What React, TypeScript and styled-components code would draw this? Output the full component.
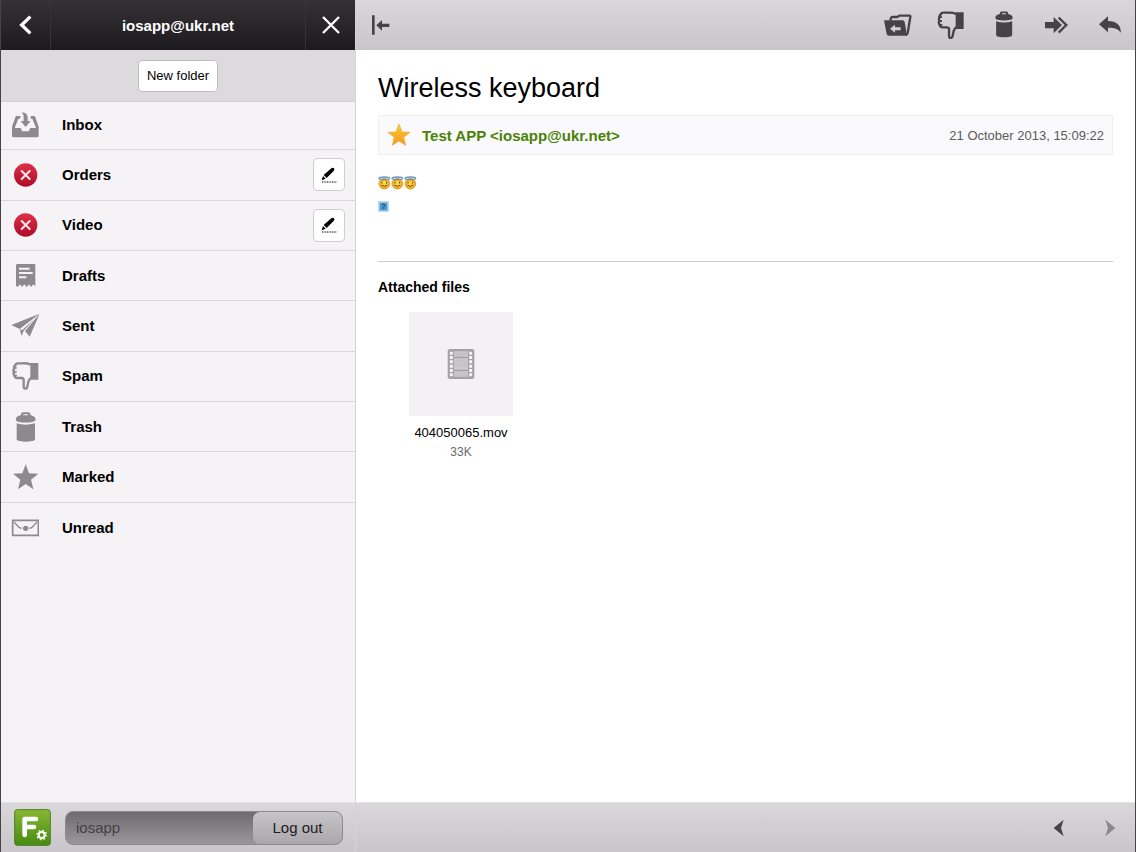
import React from "react";
import styled, { createGlobalStyle, css } from "styled-components";

const GlobalStyle = createGlobalStyle`
  *, *::before, *::after { box-sizing: border-box; }
  body { margin: 0; font-family: "Liberation Sans", Arial, sans-serif; color: #000; background: #fff; }
  button { font: inherit; color: inherit; padding: 0; border: 0; background: none; cursor: pointer; }
  h1, h2, p, ul, figure { margin: 0; padding: 0; }
  svg { display: block; }
`;

const barFill = css`
  background: linear-gradient(#d9d7da, #c8c6c9);
`;

const Shell = styled.div`
  display: grid;
  grid-template-columns: 355px minmax(0, 1fr);
  min-height: 100vh;
  border-left: 1px solid #454347;
  border-right: 1px solid #454347;
`;

const Sidebar = styled.aside`
  display: flex;
  flex-direction: column;
  background: #f5f3f6;
  border-right: 1px solid #d4d2d5;
`;

const AccountBar = styled.header`
  display: flex;
  height: 50px;
  background: linear-gradient(#343235, #1c1a1d);
  color: #fff;
`;

const AccountButton = styled.button<{ $side: "left" | "right" }>`
  display: flex;
  align-items: center;
  justify-content: center;
  width: 50px;
  ${(p) => (p.$side === "left" ? "border-right" : "border-left")}: 1px solid #353336;
`;

const AccountName = styled.h2`
  flex: 1;
  font-size: 15px;
  line-height: 51px;
  text-align: center;
`;

const FolderActions = styled.div`
  display: flex;
  align-items: center;
  justify-content: center;
  height: 52px;
  background: #dcdadd;
  border-bottom: 1px solid #d3d1d4;
`;

const NewFolder = styled.button`
  height: 32px;
  padding: 0 8px;
  font-size: 13px;
  background: #fff;
  border: 1px solid #bfbdc0;
  border-radius: 4px;
`;

const FolderList = styled.ul`
  display: grid;
  grid-template-rows: repeat(9, 1fr);
  height: 453px;
  margin-top: -2px;
  list-style: none;
`;

const FolderRow = styled.li`
  display: flex;
  align-items: center;
  padding: 0 10px;
  &:not(:last-child) {
    border-bottom: 1px solid #d9d7da;
  }
`;

const FolderLink = styled.a`
  flex: 1;
  margin-left: 23px;
  font-size: 15px;
  font-weight: bold;
  line-height: 20px;
  color: #000;
  text-decoration: none;
`;

const EditButton = styled.button`
  display: flex;
  align-items: center;
  justify-content: center;
  width: 32px;
  height: 33px;
  background: #fff;
  border: 1px solid #cfcdd0;
  border-radius: 4px;
`;

const SidebarFooter = styled.footer`
  ${barFill}
  display: flex;
  align-items: center;
  gap: 14px;
  height: 50px;
  margin-top: auto;
  padding: 0 12px 0 13px;
  border-top: 1px solid #e4e2e5;
`;

const SessionBox = styled.div`
  display: flex;
  flex: 1;
  height: 34px;
  border: 1px solid #8d8b8e;
  border-radius: 8px;
  background: linear-gradient(#6d6b6e, #99979a);
`;

const SessionUser = styled.span`
  flex: 1;
  padding-left: 10px;
  font-size: 15px;
  line-height: 32px;
  color: #434144;
`;

const LogOut = styled.button`
  width: 89px;
  font-size: 15px;
  color: #1d1b1e;
  border-radius: 7px;
  background: linear-gradient(#c6c4c7, #a9a7aa);
`;

const Reader = styled.main`
  display: flex;
  flex-direction: column;
`;

const Toolbar = styled.header`
  ${barFill}
  display: flex;
  align-items: center;
  gap: 25px;
  height: 50px;
  padding: 0 11px 0 15px;
  color: #454347;
`;

const ToolButton = styled.button<{ $pushRight?: boolean }>`
  ${(p) => p.$pushRight && "margin-left: auto;"}
`;

const Message = styled.article`
  flex: 1;
  padding: 22px;
`;

const Subject = styled.h1`
  font-size: 27px;
  font-weight: normal;
  line-height: 32px;
`;

const SenderBar = styled.div`
  display: flex;
  align-items: center;
  height: 40px;
  margin-top: 11px;
  padding: 0 8px;
  background: #faf9fb;
  border: 1px solid #f1eff2;
`;

const Sender = styled.a`
  flex: 1;
  margin-left: 11px;
  font-size: 15px;
  font-weight: bold;
  color: #4a8208;
  text-decoration: none;
`;

const SentAt = styled.time`
  font-size: 13px;
  color: #5c5a5d;
`;

const Body = styled.div`
  display: flex;
  flex-direction: column;
  gap: 11px;
  height: 107px;
  padding-top: 21px;
  border-bottom: 1px solid #cfcdd0;
`;

const Smileys = styled.div`
  display: flex;
`;

const AttachTitle = styled.h2`
  margin-top: 15px;
  font-size: 14px;
  line-height: 20px;
`;

const Attachment = styled.figure`
  display: flex;
  flex-direction: column;
  align-items: center;
  width: 166px;
  margin-top: 15px;
`;

const Preview = styled.button`
  display: flex;
  align-items: center;
  justify-content: center;
  width: 104px;
  height: 104px;
  background: #f3f1f4;
`;

const FileName = styled.figcaption`
  margin-top: 7px;
  font-size: 13px;
  line-height: 20px;
`;

const FileSize = styled.p`
  font-size: 12px;
  line-height: 18px;
  color: #69676a;
`;

const ReaderFooter = styled(Toolbar).attrs({ as: "footer" })`
  justify-content: flex-end;
  gap: 39px;
  padding: 0 19px;
  border-top: 1px solid #e4e2e5;
`;

type IconProps = { box: string; w?: number; h?: number; children: React.ReactNode };
const Icon = ({ box, w = 28, h = 28, children }: IconProps) => (
  <svg width={w} height={h} viewBox={box} fill="currentColor" aria-hidden="true">
    {children}
  </svg>
);

const FolderIcon = styled.span`
  display: flex;
  color: #8c8a8d;
`;

const InboxIcon = () => (
  <Icon box="0 0 84 90" h={30}>
    <path fillRule="evenodd" d="M17 18H28V26H22L11 54H27Q30 54 31 57L33 64H54L56 57Q57 54 60 54H75L64 26H59V18H69Q72 18 73 22L83 50V77Q83 82 78 82H8Q3 82 3 77V50L13 22Q14 18 17 18Z" />
    <path d="M32 7Q50 8 50 24V33H59L44 51L29 33H38V24Q38 12 32 7Z" />
  </Icon>
);

const DeleteIcon = () => (
  <Icon box="0 0 84 90" h={30}>
    <defs>
      <linearGradient id="deleteFill" x1="0" y1="0" x2="0" y2="1">
        <stop offset="0" stopColor="#de3048" />
        <stop offset="1" stopColor="#ac0c28" />
      </linearGradient>
    </defs>
    <circle cx="44" cy="45" r="35" fill="url(#deleteFill)" />
    <path d="M32 33L56 57M56 33L32 57" stroke="#ffe6ea" strokeWidth="6" strokeLinecap="round" />
  </Icon>
);

const DraftsIcon = () => (
  <Icon box="0 0 84 90" h={30}>
    <path d="M19 9H70Q73 9 73 12V76L67 70L60 78L54 70L47 78L40 70L33 78L27 70L20 78L15 74V13Q15 9 19 9Z" />
    <path d="M24 23H56M24 36H65M24 49H46" stroke="#f5f3f6" strokeWidth="6" />
  </Icon>
);

const SentIcon = () => (
  <Icon box="0 0 84 90" h={30}>
    <path d="M86 8L1 42L26 54Z" />
    <path d="M86 8L42 60L56 77Z" />
    <path d="M26 54L32 75L38 59L70 24L33 58Z" />
  </Icon>
);

const ThumbDownShape = () => (
  <>
    <path
      d="M60 11Q48 6 34 7H21Q14 7 14 12Q8 15 10 21Q6 26 9 32Q6 38 10 43Q11 51 19 51H32Q40 52 38 62L38 76Q38 83 43 83Q48 83 49 76L52 62Q55 54 60 51"
      fill="none"
      stroke="currentColor"
      strokeWidth="7"
      strokeLinejoin="round"
    />
    <path d="M58 6H82V56H58ZM6 18H17V23H6ZM5 30H17V35H5ZM7 41H18V46H7Z" />
  </>
);

const TrashShape = () => (
  <>
    <path fillRule="evenodd" d="M30 6Q31 1 36 1H52Q57 1 58 6V9Q72 12 74 21Q74 27 67 29Q44 34 21 29Q14 27 14 21Q16 12 30 9ZM37 7V10H51V7Z" />
    <path d="M17 34Q44 42 72 34V80Q72 86 63 87Q44 91 26 87Q17 86 17 80Z" />
  </>
);

const SpamIcon = () => <Icon box="0 0 84 90" h={30}><ThumbDownShape /></Icon>;
const TrashIcon = () => <Icon box="0 0 84 90" h={30}><TrashShape /></Icon>;

const MarkedIcon = () => (
  <Icon box="0 0 84 90" h={30}>
    <path d="M44 7L54 34L82 35L60 53L67 82L44 66L21 82L28 53L6 35L34 34Z" />
  </Icon>
);

const UnreadIcon = () => (
  <Icon box="0 0 84 90" h={30}>
    <path d="M5 22H82V67H5Z" fill="none" stroke="currentColor" strokeWidth="5" />
    <path d="M9 27L23 42Q28 47 32 44M78 27L64 42Q59 47 55 44" fill="none" stroke="currentColor" strokeWidth="4" />
    <circle cx="44" cy="46" r="8" />
  </Icon>
);

const PencilIcon = () => (
  <Icon box="0 0 48 48" w={16} h={16}>
    <path d="M31 4Q35 0 39 4Q42 8 38 12L17 33L8 24ZM6 27L14 35L2 40Z" />
    <path d="M3 45H46" stroke="currentColor" strokeWidth="3" strokeDasharray="3 2" />
  </Icon>
);

const GoldStar = () => (
  <Icon box="0 0 72 72" w={24} h={24}>
    <defs>
      <linearGradient id="gold" x1="0" y1="0" x2="0" y2="1">
        <stop offset="0" stopColor="#ffc928" />
        <stop offset="1" stopColor="#f39a22" />
      </linearGradient>
    </defs>
    <path d="M36 3L45 27L69 28L50 43L56 67L36 54L16 67L22 43L3 28L27 27Z" fill="url(#gold)" stroke="#f0a638" strokeWidth="2" />
  </Icon>
);

const AngelFace = () => (
  <svg width="13" height="14" viewBox="0 0 39 42" role="img" aria-label="Smiling face with halo">
    <circle cx="19" cy="23" r="16" fill="#f3b022" stroke="#c98712" strokeWidth="2" />
    <ellipse cx="19" cy="23" rx="11" ry="9" fill="#ffd53f" />
    <ellipse cx="19" cy="7" rx="16" ry="4" fill="none" stroke="#6e94bb" strokeWidth="4" />
    <path d="M12 17V23M26 17V23M10 27Q19 35 28 27" fill="none" stroke="#684516" strokeWidth="3" />
  </svg>
);

const UnknownGlyph = () => (
  <svg width="11" height="11" viewBox="0 0 33 33" role="img" aria-label="Unknown picture">
    <path d="M0 0H33V33H0Z" fill="#b9daf2" />
    <path d="M5 5H28V28H5Z" fill="#4d97d0" />
    <path d="M12 12Q16 7 20 11Q22 15 17 17V20M17 22V25" fill="none" stroke="#174b7e" strokeWidth="3" />
  </svg>
);

const FilmIcon = () => (
  <svg width="28" height="30" viewBox="0 0 84 90" aria-hidden="true">
    <rect x="2" y="0" width="80" height="90" rx="6" fill="#a4a2a5" />
    <path d="M21 7H63V23H21ZM21 28H63V62H21ZM21 67H63V83H21Z" fill="#cccacd" />
    <path d="M21 12H63M21 18H63M21 34H63M21 40H63M21 46H63M21 52H63M21 73H63M21 79H63" stroke="#bcbabd" strokeWidth="2" />
    <path d="M13 8V84M71 8V84" stroke="#f6f4f7" strokeWidth="9" strokeDasharray="9 4" />
  </svg>
);

const AppLogo = () => (
  <svg width="37" height="37" viewBox="0 0 111 111" role="img" aria-label="Mail">
    <defs>
      <linearGradient id="logoFill" x1="0" y1="0" x2="0" y2="1">
        <stop offset="0" stopColor="#87b832" />
        <stop offset="1" stopColor="#478a12" />
      </linearGradient>
    </defs>
    <rect x="2" y="2" width="107" height="107" rx="8" fill="url(#logoFill)" stroke="#4c7f1f" strokeWidth="3" />
    <path d="M32 78V30H66M32 54H60" fill="none" stroke="#fff" strokeWidth="14" strokeLinecap="round" strokeLinejoin="round" />
    <circle cx="83" cy="78" r="9" fill="none" stroke="#fff" strokeWidth="6" />
    <circle cx="83" cy="78" r="14" fill="none" stroke="#fff" strokeWidth="4" strokeDasharray="5 6" />
  </svg>
);

const folders: { name: string; icon: React.FC; editable?: boolean }[] = [
  { name: "Inbox", icon: InboxIcon },
  { name: "Orders", icon: DeleteIcon, editable: true },
  { name: "Video", icon: DeleteIcon, editable: true },
  { name: "Drafts", icon: DraftsIcon },
  { name: "Sent", icon: SentIcon },
  { name: "Spam", icon: SpamIcon },
  { name: "Trash", icon: TrashIcon },
  { name: "Marked", icon: MarkedIcon },
  { name: "Unread", icon: UnreadIcon },
];

export default function App() {
  return (
    <Shell>
      <GlobalStyle />
      <Sidebar>
        <AccountBar>
          <AccountButton $side="left" aria-label="Back">
            <Icon box="0 0 60 60" w={20} h={20}>
              <path d="M43 5L17 30L43 55" fill="none" stroke="currentColor" strokeWidth="10" />
            </Icon>
          </AccountButton>
          <AccountName>iosapp@ukr.net</AccountName>
          <AccountButton $side="right" aria-label="Close">
            <Icon box="0 0 60 60" w={20} h={20}>
              <path d="M6 6L54 54M54 6L6 54" fill="none" stroke="currentColor" strokeWidth="7" />
            </Icon>
          </AccountButton>
        </AccountBar>
        <FolderActions>
          <NewFolder>New folder</NewFolder>
        </FolderActions>
        <FolderList>
          {folders.map(({ name, icon: Glyph, editable }) => (
            <FolderRow key={name}>
              <FolderIcon><Glyph /></FolderIcon>
              <FolderLink href={`#${name.toLowerCase()}`}>{name}</FolderLink>
              {editable && (
                <EditButton aria-label={`Rename ${name}`}><PencilIcon /></EditButton>
              )}
            </FolderRow>
          ))}
        </FolderList>
        <SidebarFooter>
          <AppLogo />
          <SessionBox>
            <SessionUser>iosapp</SessionUser>
            <LogOut>Log out</LogOut>
          </SessionBox>
        </SidebarFooter>
      </Sidebar>
      <Reader>
        <Toolbar>
          <ToolButton aria-label="Collapse folders">
            <Icon box="0 0 60 60" w={20} h={20}>
              <path d="M3 1H11V59H3ZM16 31L33 15V26H55V36H33V47Z" />
            </Icon>
          </ToolButton>
          <ToolButton $pushRight aria-label="Move to folder">
            <Icon box="71 33 84 84">
              <path d="M90 62L92 54Q93 51 96 51H111L117 47H147Q151 47 150 51L142 99Q141 103 137 104" fill="none" stroke="currentColor" strokeWidth="7" strokeLinejoin="round" />
              <path fillRule="evenodd" d="M71 61H127Q132 61 133 66L140 107H86Q80 107 79 102ZM89 86L104 74V82H121V91H104V98Z" />
            </Icon>
          </ToolButton>
          <ToolButton aria-label="Spam"><Icon box="2 2 84 84"><ThumbDownShape /></Icon></ToolButton>
          <ToolButton aria-label="Delete"><Icon box="-4 -1 96 96"><TrashShape /></Icon></ToolButton>
          <ToolButton aria-label="Forward">
            <Icon box="549 33 84 84">
              <path d="M555 66H581V51L606 75L581 100V85H555Z" />
              <path d="M596 53L619 75L596 98" fill="none" stroke="currentColor" strokeWidth="7" />
            </Icon>
          </ToolButton>
          <ToolButton aria-label="Reply">
            <Icon box="708 33 84 84">
              <path d="M717 73L744 49V63C770 63 782 75 783 98C774 86 764 83 744 83V97Z" />
            </Icon>
          </ToolButton>
        </Toolbar>
        <Message>
          <Subject>Wireless keyboard</Subject>
          <SenderBar>
            <GoldStar />
            <Sender href="mailto:iosapp@ukr.net">Test APP &lt;iosapp@ukr.net&gt;</Sender>
            <SentAt dateTime="2013-10-21T15:09:22">21 October 2013, 15:09:22</SentAt>
          </SenderBar>
          <Body>
            <Smileys>
              <AngelFace />
              <AngelFace />
              <AngelFace />
            </Smileys>
            <UnknownGlyph />
          </Body>
          <AttachTitle>Attached files</AttachTitle>
          <Attachment>
            <Preview aria-label="Open 404050065.mov"><FilmIcon /></Preview>
            <FileName>404050065.mov</FileName>
            <FileSize>33K</FileSize>
          </Attachment>
        </Message>
        <ReaderFooter>
          <ToolButton aria-label="Previous message">
            <Icon box="0 0 36 54" w={12} h={18}>
              <path d="M2 27L32 2L24 27L32 52Z" />
            </Icon>
          </ToolButton>
          <ToolButton aria-label="Next message">
            <Icon box="0 0 36 54" w={12} h={18}>
              <path d="M34 27L4 2L12 27L4 52Z" fill="#8b898c" />
            </Icon>
          </ToolButton>
        </ReaderFooter>
      </Reader>
    </Shell>
  );
}
